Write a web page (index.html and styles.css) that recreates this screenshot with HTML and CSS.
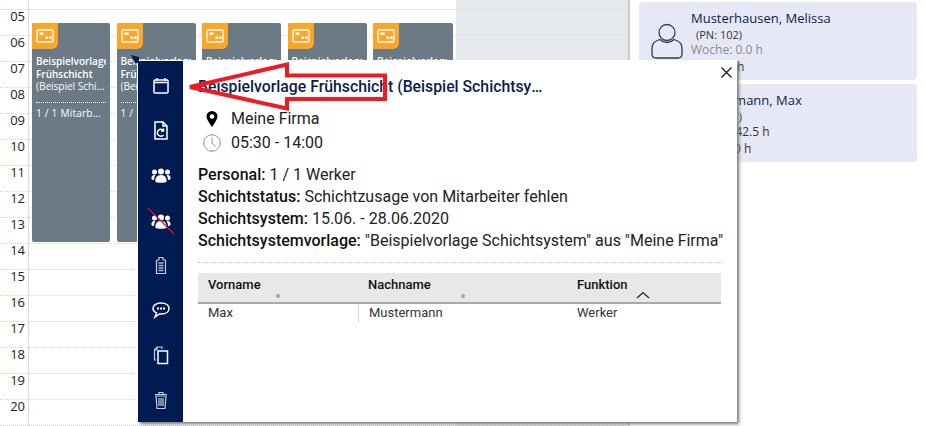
FILE: index.html
```html
<!DOCTYPE html>
<html lang="de">
<head>
<meta charset="utf-8">
<title>Schichtplan</title>
<link rel="stylesheet" href="styles.css">
</head>
<body>
<div class="page">
  <section class="calendar">
    <div class="closed"></div>
    <div class="hours">
      <div class="hour hour-lead"></div>
      <div class="hour"><span class="hour-label">05</span></div>
      <div class="hour"><span class="hour-label">06</span></div>
      <div class="hour"><span class="hour-label">07</span></div>
      <div class="hour"><span class="hour-label">08</span></div>
      <div class="hour"><span class="hour-label">09</span></div>
      <div class="hour"><span class="hour-label">10</span></div>
      <div class="hour"><span class="hour-label">11</span></div>
      <div class="hour"><span class="hour-label">12</span></div>
      <div class="hour"><span class="hour-label">13</span></div>
      <div class="hour"><span class="hour-label">14</span></div>
      <div class="hour"><span class="hour-label">15</span></div>
      <div class="hour"><span class="hour-label">16</span></div>
      <div class="hour"><span class="hour-label">17</span></div>
      <div class="hour"><span class="hour-label">18</span></div>
      <div class="hour"><span class="hour-label">19</span></div>
      <div class="hour"><span class="hour-label">20</span></div>
    </div>
    <div class="shifts">
      <article class="shift">
        <div class="badge"><svg class="badge-icon" viewBox="0 0 18 14"><rect x="1" y="1" width="16" height="12" rx="1"/><path class="badge-fill" d="M3.500 3.500h4v2.500h-4zM9.500 7.500h2.500v2.500h-2.500zM13 7.500h2.500v2.500h-2.500z"/></svg></div>
        <div class="shift-name">Beispielvorlage Frühschicht</div>
        <div class="shift-sys">(Beispiel Schichtsystem)</div>
        <div class="shift-count">1 / 1 Mitarbeiter</div>
      </article>
      <article class="shift">
        <div class="badge"><svg class="badge-icon" viewBox="0 0 18 14"><rect x="1" y="1" width="16" height="12" rx="1"/><path class="badge-fill" d="M3.500 3.500h4v2.500h-4zM9.500 7.500h2.500v2.500h-2.500zM13 7.500h2.500v2.500h-2.500z"/></svg></div>
        <div class="shift-name">Beispielvorlage Frühschicht</div>
        <div class="shift-sys">(Beispiel Schichtsystem)</div>
        <div class="shift-count">1 / 1 Mitarbeiter</div>
      </article>
      <article class="shift">
        <div class="badge"><svg class="badge-icon" viewBox="0 0 18 14"><rect x="1" y="1" width="16" height="12" rx="1"/><path class="badge-fill" d="M3.500 3.500h4v2.500h-4zM9.500 7.500h2.500v2.500h-2.500zM13 7.500h2.500v2.500h-2.500z"/></svg></div>
        <div class="shift-name">Beispielvorlage Frühschicht</div>
        <div class="shift-sys">(Beispiel Schichtsystem)</div>
        <div class="shift-count">1 / 1 Mitarbeiter</div>
      </article>
      <article class="shift">
        <div class="badge"><svg class="badge-icon" viewBox="0 0 18 14"><rect x="1" y="1" width="16" height="12" rx="1"/><path class="badge-fill" d="M3.500 3.500h4v2.500h-4zM9.500 7.500h2.500v2.500h-2.500zM13 7.500h2.500v2.500h-2.500z"/></svg></div>
        <div class="shift-name">Beispielvorlage Frühschicht</div>
        <div class="shift-sys">(Beispiel Schichtsystem)</div>
        <div class="shift-count">1 / 1 Mitarbeiter</div>
      </article>
      <article class="shift">
        <div class="badge"><svg class="badge-icon" viewBox="0 0 18 14"><rect x="1" y="1" width="16" height="12" rx="1"/><path class="badge-fill" d="M3.500 3.500h4v2.500h-4zM9.500 7.500h2.500v2.500h-2.500zM13 7.500h2.500v2.500h-2.500z"/></svg></div>
        <div class="shift-name">Beispielvorlage Frühschicht</div>
        <div class="shift-sys">(Beispiel Schichtsystem)</div>
        <div class="shift-count">1 / 1 Mitarbeiter</div>
      </article>
    </div>
  </section>

  <aside class="people">
    <div class="person">
      <svg class="avatar" viewBox="0 0 32 36"><circle cx="16" cy="9.500" r="8"/><path d="M9 16.500C4 18 1 20 1 25v6c0 2.500 1.500 4 4 4h22c2.500 0 4-1.500 4-4v-6c0-5-3-7-8-8.500-2 2-4.500 3-7 3s-5-1-7-3z"/></svg>
      <div class="person-info">
        <div class="person-name">Musterhausen, Melissa</div>
        <div class="person-pn">(PN: 102)</div>
        <div class="person-week person-muted">Woche: 0.0 h</div>
        <div class="person-week">Soll: 0.0 h</div>
      </div>
    </div>
    <div class="person">
      <svg class="avatar" viewBox="0 0 32 36"><circle cx="16" cy="9.500" r="8"/><path d="M9 16.500C4 18 1 20 1 25v6c0 2.500 1.500 4 4 4h22c2.500 0 4-1.500 4-4v-6c0-5-3-7-8-8.500-2 2-4.500 3-7 3s-5-1-7-3z"/></svg>
      <div class="person-info">
        <div class="person-name">Mustermann, Max</div>
        <div class="person-pn">(PN: 101)</div>
        <div class="person-week">Woche: 42.5 h</div>
        <div class="person-week">Soll: 10.0 h</div>
      </div>
    </div>
  </aside>
</div>

<div class="popup">
  <svg class="popup-tail" viewBox="0 0 8 8"><path d="M0 0L8 2V8H4z"/></svg>
  <nav class="rail">
    <svg class="rail-icon" viewBox="0 0 22 22"><rect class="line" x="4" y="5" width="14" height="13" rx="1"/><path class="line" d="M4 7.500h14"/><path class="line" d="M7 3v3M15 3v3"/></svg>
    <svg class="rail-icon" viewBox="0 0 22 22"><path class="line" d="M5 2h8l4 4v13H5zM13 2v4h4"/><path class="line" d="M13.500 10.500a3.500 3.500 0 1 0 0 4.500M13.500 8.500v2.500h-2.500"/></svg>
    <svg class="rail-icon" viewBox="0 0 22 22"><circle class="solid" cx="11" cy="6.500" r="3"/><circle class="solid" cx="4.500" cy="7" r="2.500"/><circle class="solid" cx="17.500" cy="7" r="2.500"/><path class="solid" d="M5.500 17c-.5-3 .5-7 5.500-7s6 4 5.500 7c-1 1-10 1-11 0zM1.500 14c-.5-2 .5-4 3-4l1 .5C4.500 11.500 4 13 4 15c-1 0-2-.5-2.500-1zM20.500 14c.5-2-.5-4-3-4l-1 .5c1 1 1.500 2.500 1.500 4.500 1 0 2-.5 2.500-1z"/></svg>
    <svg class="rail-icon rail-icon-cross" viewBox="0 0 28 28"><circle class="solid" cx="14" cy="10.500" r="3"/><circle class="solid" cx="7.500" cy="11" r="2.500"/><circle class="solid" cx="20.500" cy="11" r="2.500"/><path class="solid" d="M8.500 21c-.5-3 .5-7 5.500-7s6 4 5.500 7c-1 1-10 1-11 0zM4.500 18c-.5-2 .5-4 3-4l1 .5C7.500 15.500 7 17 7 19c-1 0-2-.5-2.500-1zM23.500 18c.5-2-.5-4-3-4l-1 .5c1 1 1.500 2.500 1.500 4.500 1 0 2-.5 2.500-1z"/><path class="slash" d="M1 1L27 27"/></svg>
    <svg class="rail-icon" viewBox="0 0 22 22"><path class="soft" d="M6.500 6.500l2.500-1v-2h4v2l2.500 1v13h-9z"/><path class="soft soft-heavy" d="M8.500 9h5M8.500 11.500h5M8.500 14h5M8.500 16.500h5"/></svg>
    <svg class="rail-icon" viewBox="0 0 22 22"><path class="line" d="M11 4c-5 0-8 2.500-8 5.500 0 2 1.500 3.500 3.500 4.500L5 18l4.500-3c.5 0 1 .1 1.500.1 5 0 8-2.500 8-5.600S16 4 11 4z"/><path class="dots" d="M7 9.500h2M10 9.500h2M13 9.500h2"/></svg>
    <svg class="rail-icon" viewBox="0 0 22 22"><path class="soft" d="M6 16H4.500V5.500L7 3h5v2"/><path class="line" d="M8 7h9.500v12.500H8z"/><path class="soft" d="M7 3v3H4.500"/></svg>
    <svg class="rail-icon" viewBox="0 0 22 22"><path class="soft" d="M6 7h10l-1 12.500H7zM5 5.500h12M9 5.500V3.500h4v2M9 9v8M11 9v8M13 9v8"/></svg>
  </nav>
  <div class="popup-body">
    <svg class="close" viewBox="0 0 11 11"><path d="M.5.500l10 10M10.500.500l-10 10"/></svg>
    <h2 class="popup-title">Beispielvorlage Frühschicht (Beispiel Schichtsystem)</h2>
    <div class="meta">
      <div class="meta-row">
        <span class="meta-icon"><svg class="pin" viewBox="0 0 12 16"><path fill-rule="evenodd" d="M6 0a5.500 5.500 0 0 0-5.500 5.500C.5 9 6 16 6 16s5.500-7 5.500-10.500A5.500 5.500 0 0 0 6 0zm0 3.200a2.300 2.300 0 1 1 0 4.600 2.300 2.300 0 0 1 0-4.600z"/></svg></span>
        <span>Meine Firma</span>
      </div>
      <div class="meta-row">
        <span class="meta-icon"><svg class="clock" viewBox="0 0 18 18"><circle cx="9" cy="9" r="8.300"/><path d="M9 3.500V9l3.500 3.500"/><path class="clock-ticks" d="M9 .700v1.500M9 15.800v1.500M.700 9h1.500M15.800 9h1.500"/></svg></span>
        <span>05:30 - 14:00</span>
      </div>
    </div>
    <div class="facts">
      <div><b>Personal:</b> 1 / 1 Werker</div>
      <div><b>Schichtstatus:</b> Schichtzusage von Mitarbeiter fehlen</div>
      <div><b>Schichtsystem:</b> 15.06. - 28.06.2020</div>
      <div><b>Schichtsystemvorlage:</b> "Beispielvorlage Schichtsystem" aus "Meine Firma"</div>
    </div>
    <div class="staff">
      <div class="staff-head">
        <div class="th">Vorname<i class="grip"></i></div>
        <div class="th">Nachname<i class="grip"></i></div>
        <div class="th">Funktion<svg class="sort" viewBox="0 0 14 8"><path d="M1 7l6-5.500L13 7"/></svg></div>
      </div>
      <div class="staff-row">
        <div class="td">Max</div>
        <div class="td td-split">Mustermann</div>
        <div class="td">Werker</div>
      </div>
    </div>
  </div>
</div>

<svg class="arrow" viewBox="0 0 215 56"><path d="M4 26L101 3.500V14.500H199V38H101V47.500z"/></svg>
</body>
</html>
```

FILE: styles.css
```css
* { box-sizing: border-box; }
html, body { margin: 0; height: 100%; }
body {
  position: relative;
  width: 925px;
  height: 426px;
  overflow: hidden;
  background: #fff;
  font-family: "Open Sans", sans-serif;
  color: #111;
}
.page { display: flex; height: 426px; }

/* calendar */
.calendar { position: relative; width: 630px; flex: none; border-right: 2px solid #c9cbcc; }
.closed { position: absolute; left: 456px; right: 0; top: 0; bottom: 0; background: #e6eaed; }
.hours { position: relative; }
.hour {
  position: relative;
  height: 26px;
  border-bottom: 1px dotted #d6d6d6;
  display: flex;
  align-items: flex-start;
}
.hour-lead { height: 10px; }
.hour-label { width: 25px; text-align: right; font: 13px/13px "Open Sans", sans-serif; color: #222; }
.hours::before {
  content: "";
  position: absolute;
  left: 28px;
  top: 0;
  bottom: 0;
  width: 1px;
  background: #dadada;
  z-index: 1;
}
.shifts {
  position: absolute;
  left: 32px;
  top: 23px;
  height: 219px;
  display: grid;
  grid-template-columns: 78px 79px 79px 79px 80px;
  column-gap: 6.500px;
}
.shift {
  min-width: 0;
  background: #6b7a85;
  color: #fff;
  border-radius: 2px;
  padding: 0 4px;
  overflow: hidden;
}
.badge {
  width: 26px;
  height: 26px;
  margin-left: -4px;
  background: #fba629;
  border-radius: 2px 0 6px 0;
  display: flex;
  align-items: center;
  justify-content: center;
}
.badge-icon { width: 18px; height: 14px; fill: none; stroke: #fff; stroke-width: 1.300; }
.badge-fill { fill: #fff; stroke: none; }
.shift-name {
  margin-top: 6px;
  font: 600 10px/13px "Open Sans", sans-serif;
  width: 70px;
  overflow: hidden;
}
.shift-sys, .shift-count {
  font: 10px/13px "Open Sans", sans-serif;
  white-space: nowrap;
  overflow: hidden;
  text-overflow: ellipsis;
}
.shift-sys { margin-top: -1px; }
.shift-count { margin-top: 9px; padding-top: 4px; border-top: 1px dotted #fff; letter-spacing: .25px; }

/* people */
.people { flex: 1; padding: 2px 8px 0 9px; display: flex; flex-direction: column; gap: 4px; }
.person {
  height: 78px;
  background: #e6e9f5;
  border-radius: 4px;
  display: flex;
  padding: 8px 0 0 12px;
  gap: 8px;
}
.avatar { width: 32px; height: 36px; margin-top: 13px; fill: none; stroke: #2e3a56; stroke-width: 1.300; flex: none; }
.person-info { min-width: 0; }
.person-name { font: 13px/17px "Open Sans", sans-serif; color: #0b1c4a; }
.person-pn { margin-left: 5px; font: 11px/15px "Open Sans", sans-serif; color: #333; }
.person-week { font: 12px/16.500px "Open Sans", sans-serif; color: #333; }
.person-muted { color: #8b8b8b; }

/* popup */
.popup {
  position: absolute;
  left: 138px;
  top: 61px;
  width: 599px;
  height: 361px;
  display: flex;
  background: #fff;
  box-shadow: -1px -1px 0 #fff, 2px 2px 3px #777;
}
.popup-tail { position: absolute; left: -7px; top: -6px; width: 8px; height: 8px; fill: #001a52; }
.rail {
  width: 45px;
  flex: none;
  background: #001a52;
  padding: 14px 0 11px;
  display: flex;
  flex-direction: column;
  align-items: center;
  justify-content: space-between;
}
.rail-icon { width: 22px; height: 22px; display: block; flex: none; }
.rail-icon-cross { width: 28px; height: 28px; margin: -3px 0; }
.line { fill: none; stroke: #fff; stroke-width: 1.500; }
.soft { fill: none; stroke: #c3cfe0; stroke-width: 1.200; }
.soft-heavy { stroke-width: 1.600; stroke: #aeb9cf; }
.solid { fill: #fff; }
.dots { fill: none; stroke: #fff; stroke-width: 2; }
.slash { stroke: #e0102a; stroke-width: 1.300; fill: none; }
.popup-body { position: relative; flex: 1; min-width: 0; padding: 17px 16px 0 15px; }
.close { position: absolute; right: 5px; top: 6px; width: 11px; height: 11px; fill: none; stroke: #111; stroke-width: 1.200; }
.popup-title {
  margin: 0;
  width: 345px;
  font: 500 15.800px/18px Roboto, sans-serif;
  color: #0b1c4a;
  white-space: nowrap;
  overflow: hidden;
  text-overflow: ellipsis;
}
.meta { margin-top: 11px; font: 16px/24px Roboto, sans-serif; color: #222; }
.meta-row { display: flex; align-items: center; height: 24px; }
.meta-icon { width: 33px; display: flex; justify-content: center; padding-right: 5px; flex: none; }
.pin { width: 12px; height: 16px; fill: #000; }
.clock { width: 18px; height: 18px; fill: none; stroke: #8a97ad; stroke-width: 1; }
.clock-ticks { stroke: #a9b3c4; }
.facts { margin-top: 9px; font: 16px/22px Roboto, sans-serif; color: #222; white-space: nowrap; }
.facts b { font-weight: 500; color: #111; }
.staff { margin-top: 10px; border-top: 1px dotted #bdbdbd; padding-top: 10px; width: 524px; }
.staff-head {
  display: grid;
  grid-template-columns: 160px 209px 1fr;
  height: 31px;
  margin-right: 1px;
  background: #e8e8e8;
  border-bottom: 2px solid #aaa;
}
.th { position: relative; padding: 4px 0 0 10px; font: 500 13px/15px Roboto, sans-serif; color: #111; }
.grip { position: absolute; left: calc(50% - 2px); top: 21px; width: 4px; height: 4px; border-radius: 50%; background: #a5a5a5; }
.sort { position: absolute; left: 69px; top: 18px; width: 14px; height: 8px; fill: none; stroke: #222; stroke-width: 1.200; }
.staff-row { display: grid; grid-template-columns: 160px 209px 1fr; height: 18px; }
.td { padding: 1px 0 0 10px; font: 13px/16px Roboto, sans-serif; color: #333; }
.td-split { border-left: 1px solid #d6d6d6; }

.arrow {
  position: absolute;
  left: 186px;
  top: 61px;
  width: 215px;
  height: 56px;
  fill: none;
  stroke: #ed1c24;
  stroke-width: 4;
}
```
